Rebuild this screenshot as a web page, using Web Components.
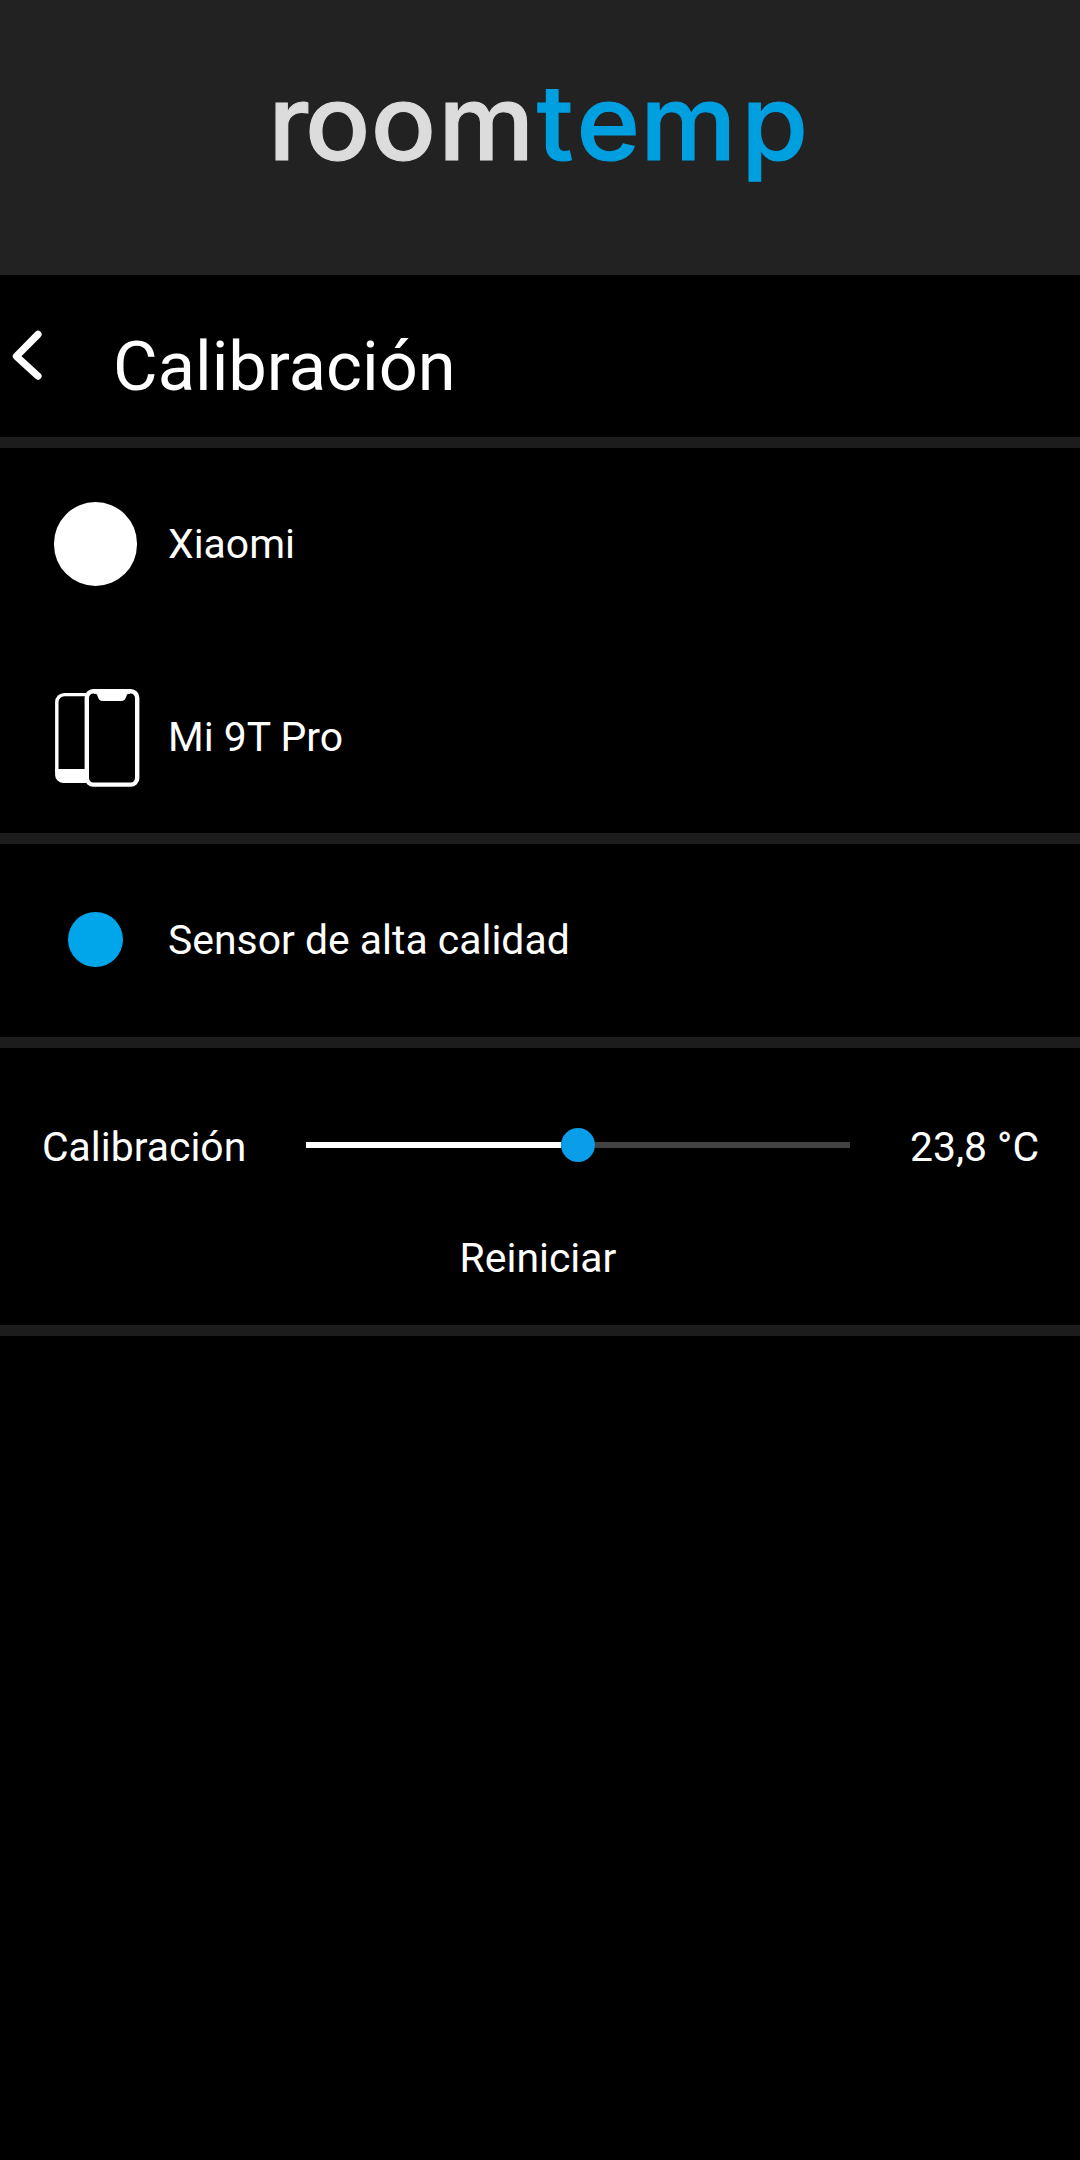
<!DOCTYPE html>
<html lang="es">
<head>
<meta charset="utf-8">
<title>roomtemp</title>
<style>
html,body{margin:0;background:#000}
body{font-family:Roboto,"Liberation Sans",sans-serif;color:#fff;font-size:40.9px}
</style>
</head>
<body>
<room-app></room-app>
<script>
const define = (name, html) => {
  const tpl = document.createElement('template');
  tpl.innerHTML = html;
  customElements.define(name, class extends HTMLElement {
    constructor() {
      super();
      this.attachShadow({mode: 'open'}).append(tpl.content.cloneNode(true));
    }
  });
};

define('brand-header', `
<style>
:host{display:block;height:275px;background:#222}
svg{display:block}
text{font:500 104px Inter,sans-serif;fill:#dcdcdc;stroke:#dcdcdc;stroke-width:1.1px}
.accent{fill:#009fe0;stroke:#009fe0}
</style>
<svg width="1080" height="275" viewBox="0 0 1080 275" role="img" aria-label="roomtemp">
  <text transform="scale(1.04 1)" y="160" x="257.9 293.4 356.6 421.4 516.2 554.4 615.6 712.7">room<tspan class="accent">temp</tspan></text>
</svg>`);

define('page-title', `
<style>
:host{display:flex;height:162px;align-items:center}
svg{display:block;flex:none;width:113px;height:162px}
h1{margin:0;padding-top:22px;font-size:68.6px;line-height:80px;font-weight:400}
</style>
<svg viewBox="0 0 113 162"><path d="M38 59.4 16.4 81.3l21.6 19.8" fill="none" stroke="#fff" stroke-width="7.2" stroke-linecap="round" stroke-linejoin="round"/></svg>
<h1><slot></slot></h1>`);

define('section-rule', `<style>:host{display:block;height:11px;background:#1c1c1d}</style>`);

define('info-row', `
<style>
:host{display:flex;height:192.5px;align-items:center}
.icon{display:flex;flex:none;width:113px;padding-left:39px;margin-right:16px;justify-content:center}
.label{line-height:48px;white-space:nowrap}
</style>
<div class="icon"><slot name="icon"></slot></div><div class="label"><slot></slot></div>`);

define('dot-icon', `
<style>
:host{display:block;width:var(--size);height:var(--size);border-radius:50%;background:var(--fill);margin-bottom:.5px}
</style>`);

define('phones-icon', `
<style>:host{display:block;margin-top:3px}svg{display:block}</style>
<svg width="88" height="102" viewBox="52 687 88 102">
  <path d="M86 694.6H64.4a7.6 7.6 0 0 0-7.6 7.6V772" fill="none" stroke="#fff" stroke-width="3.4"/>
  <path d="M55.1 769H86v14H63a8 8 0 0 1-7.9-8z" fill="#fff"/>
  <rect x="86.8" y="691.2" width="50.4" height="93.4" rx="6.5" fill="#000" stroke="#fff" stroke-width="4.4"/>
  <path d="M94 692h36v1.8h-1.5c-1 0-1.5.8-1.9 2-1 3.6-2.5 5.3-5.6 5.3h-18c-3.2 0-4.6-1.7-5.6-5.3-.4-1.2-.8-2-1.9-2H94z" fill="#fff"/>
</svg>`);

define('value-slider', `
<style>
:host{display:block;width:544px}
.track{display:flex;align-items:center;height:34px}
.done{width:255px;height:6px;background:#fff}
.thumb{width:34px;height:34px;border-radius:50%;background:#0a9dea}
.rest{flex:1;height:6px;background:#424242}
</style>
<div class="track"><div class="done"></div><div class="thumb"></div><div class="rest"></div></div>`);

define('calibration-panel', `
<style>
:host{display:block;height:277px}
.row{display:flex;align-items:center;height:194px;padding:0 41px 0 42px}
.name{width:264px}
.name,.value{line-height:48px;padding-top:4px;white-space:nowrap}
.value{margin-left:auto}
.reset{margin-left:-4px;text-align:center;line-height:48px;margin-top:-8px}
</style>
<div class="row">
  <div class="name"><slot name="name"></slot></div>
  <value-slider></value-slider>
  <div class="value"><slot name="value"></slot></div>
</div>
<div class="reset"><slot name="reset"></slot></div>`);

define('room-app', `
<style>
:host{display:block;min-height:2160px;background:#000}
.sensor{height:191px;margin-bottom:2px}
</style>
<brand-header></brand-header>
<page-title>Calibración</page-title>
<section-rule></section-rule>
<info-row><dot-icon slot="icon" style="--size:83.3px;--fill:#fff"></dot-icon>Xiaomi</info-row>
<info-row><phones-icon slot="icon"></phones-icon>Mi 9T Pro</info-row>
<section-rule></section-rule>
<info-row class="sensor"><dot-icon slot="icon" style="--size:55.4px;--fill:#00a5ea"></dot-icon>Sensor de alta calidad</info-row>
<section-rule></section-rule>
<calibration-panel>
  <span slot="name">Calibración</span><span slot="value">23,8 °C</span><span slot="reset">Reiniciar</span>
</calibration-panel>
<section-rule></section-rule>`);
</script>
</body>
</html>
